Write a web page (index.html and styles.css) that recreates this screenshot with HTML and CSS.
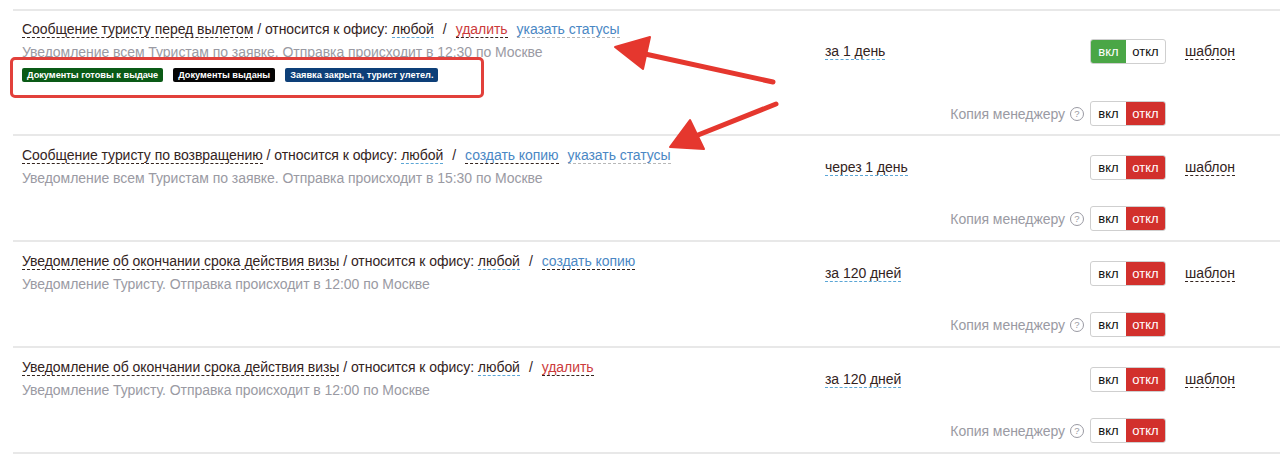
FILE: index.html
```html
<!DOCTYPE html>
<html>
<head>
	<title>Уведомления туристам</title>
	<meta charset="utf-8">
	<link rel="stylesheet" href="styles.css">
</head>
<body>
	<div class="list">
		<div class="item">
			<div class="main">
				<div class="info">
					<div class="title"><span class="name">Сообщение туристу перед вылетом</span> / относится к офису: <span class="office">любой</span><span class="slash">/</span><span class="act del">удалить</span><span class="act blue light">указать статусы</span></div>
					<div class="sub">Уведомление всем Туристам по заявке. Отправка происходит в 12:30 по Москве</div>
					<div class="badges">
						<span class="badge green">Документы готовы к выдаче</span>
						<span class="badge black">Документы выданы</span>
						<span class="badge navy">Заявка закрыта, турист улетел.</span>
					</div>
				</div>
				<div class="when"><span>за 1 день</span></div>
				<div class="switch"><span class="on active">вкл</span><span class="off">откл</span></div>
				<div class="tpl"><span>шаблон</span></div>
			</div>
			<div class="copy">Копия менеджеру <span class="help">?</span>
				<div class="switch"><span class="on">вкл</span><span class="off active">откл</span></div>
			</div>
		</div>

		<div class="item">
			<div class="main">
				<div class="info">
					<div class="title"><span class="name">Сообщение туристу по возвращению</span> / относится к офису: <span class="office">любой</span><span class="slash">/</span><span class="act blue">создать копию</span><span class="act blue light">указать статусы</span></div>
					<div class="sub">Уведомление всем Туристам по заявке. Отправка происходит в 15:30 по Москве</div>
				</div>
				<div class="when"><span>через 1 день</span></div>
				<div class="switch"><span class="on">вкл</span><span class="off active">откл</span></div>
				<div class="tpl"><span>шаблон</span></div>
			</div>
			<div class="copy">Копия менеджеру <span class="help">?</span>
				<div class="switch"><span class="on">вкл</span><span class="off active">откл</span></div>
			</div>
		</div>

		<div class="item">
			<div class="main">
				<div class="info">
					<div class="title"><span class="name">Уведомление об окончании срока действия визы</span> / относится к офису: <span class="office">любой</span><span class="slash">/</span><span class="act blue">создать копию</span></div>
					<div class="sub">Уведомление Туристу. Отправка происходит в 12:00 по Москве</div>
				</div>
				<div class="when"><span>за 120 дней</span></div>
				<div class="switch"><span class="on">вкл</span><span class="off active">откл</span></div>
				<div class="tpl"><span>шаблон</span></div>
			</div>
			<div class="copy">Копия менеджеру <span class="help">?</span>
				<div class="switch"><span class="on">вкл</span><span class="off active">откл</span></div>
			</div>
		</div>

		<div class="item">
			<div class="main">
				<div class="info">
					<div class="title"><span class="name">Уведомление об окончании срока действия визы</span> / относится к офису: <span class="office">любой</span><span class="slash">/</span><span class="act del">удалить</span></div>
					<div class="sub">Уведомление Туристу. Отправка происходит в 12:00 по Москве</div>
				</div>
				<div class="when"><span>за 120 дней</span></div>
				<div class="switch"><span class="on">вкл</span><span class="off active">откл</span></div>
				<div class="tpl"><span>шаблон</span></div>
			</div>
			<div class="copy">Копия менеджеру <span class="help">?</span>
				<div class="switch"><span class="on">вкл</span><span class="off active">откл</span></div>
			</div>
		</div>
	</div>

	<!-- annotations drawn over the screenshot -->
	<div class="mark-box"></div>
	<svg class="arrows" width="1280" height="458" viewBox="0 0 1280 458">
		<g fill="#e5372e" stroke="#e5372e" stroke-linecap="round" stroke-linejoin="round">
			<line x1="773" y1="82" x2="636" y2="52" stroke-width="5"/>
			<polygon points="615,47 650,37 643,69" stroke-width="2"/>
			<line x1="776" y1="104" x2="688" y2="139" stroke-width="5"/>
			<polygon points="670,147 690,120 704,149" stroke-width="2"/>
		</g>
	</svg>
</body>
</html>
```

FILE: styles.css
```css
body{
	margin: 0;
	font-family: "Liberation Sans", Arial, sans-serif;
	font-size: 14px;
	letter-spacing: -0.05px;
	color: #33231d;
	background: #fff;
	position: relative;
}
.list{
	margin: 9px 0 0 13px;
	border-top: 2px solid #e8e8e8;
}
.item{
	padding: 9px 0 9px 9px;
	border-bottom: 2px solid #e8e8e8;
}
.item:first-child{
	padding: 8px 0 8px 9px;
}
.main{
	display: grid;
	grid-template-columns: 803px 265px 95px auto;
	align-items: center;
}
.title{
	line-height: 21px;
	white-space: nowrap;
}
.name{
	border-bottom: 1px dashed #33231d;
}
.office{
	border-bottom: 1px dashed #5ba6d6;
}
.slash{
	margin: 0 9px 0 9px;
}
.act{
	border-bottom: 1px dashed #33231d;
	margin-right: 9px;
}
.del{
	color: #cc3b3b;
}
.blue{
	color: #4a87c4;
}
.blue.light{
	border-bottom-color: #b8b8b8;
}
.sub{
	color: #9a9aa3;
	line-height: 22px;
	margin-top: 1px;
}
.badges{
	display: flex;
	gap: 10px;
	padding: 5px 0 2px;
	letter-spacing: 0;
}
.badge{
	color: #fff;
	font-size: 9.2px;
	font-weight: bold;
	line-height: 14px;
	padding: 0 5px;
	border-radius: 2px;
}
.badge.green{
	background: #0a5a16;
}
.badge.black{
	background: #050505;
}
.badge.navy{
	background: #0d3f78;
}
.when span{
	border-bottom: 1px dashed #5ba6d6;
	line-height: 19px;
}
.tpl span{
	border-bottom: 1px dashed #33231d;
	line-height: 19px;
}
.switch{
	display: flex;
	width: 76px;
	height: 25px;
	border: 1px solid #cfcfcf;
	border-radius: 3px;
	box-sizing: border-box;
	overflow: hidden;
	font-size: 13px;
	line-height: 23px;
	letter-spacing: 0;
}
.switch span{
	text-align: center;
	color: #111;
}
.switch .on{
	width: 36px;
}
.switch .off{
	width: 40px;
}
.switch .on.active{
	background: #4aa646;
	color: #fff;
}
.switch .off.active{
	background: #d2302c;
	color: #fff;
}
.copy{
	display: flex;
	align-items: center;
	justify-content: flex-end;
	width: 1144px;
	margin-top: 17px;
	color: #9a9aa3;
}
.item:first-child .copy{
	margin-top: 17px;
}
.help{
	display: inline-block;
	width: 12px;
	height: 12px;
	border: 1px solid #9a9aa3;
	border-radius: 50%;
	font-size: 9.5px;
	line-height: 12px;
	text-align: center;
	letter-spacing: 0;
	margin: 0 6px 0 5px;
}
.mark-box{
	position: absolute;
	left: 10px;
	top: 57px;
	width: 468px;
	height: 35px;
	border: 3px solid #e2403b;
	border-radius: 5px;
}
.arrows{
	position: absolute;
	left: 0;
	top: 0;
	pointer-events: none;
}
```
